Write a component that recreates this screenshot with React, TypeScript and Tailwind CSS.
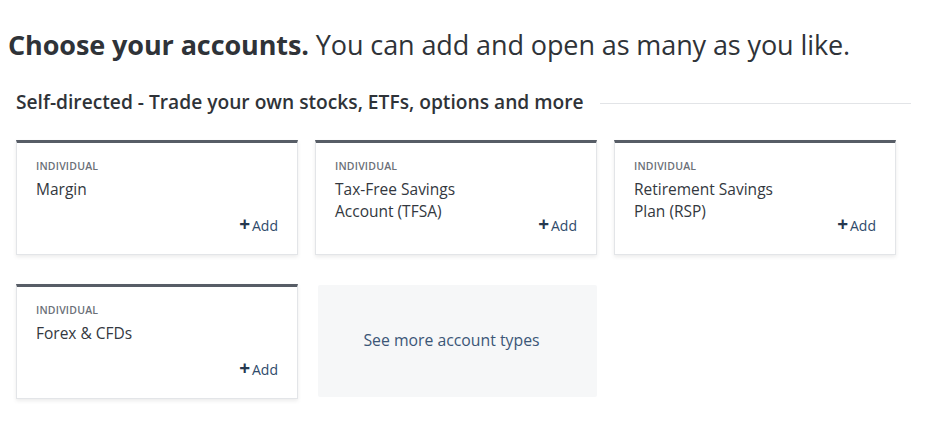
import React from "react";

const cards = [
  { name: ["Margin"] },
  { name: ["Tax-Free Savings", "Account (TFSA)"] },
  { name: ["Retirement Savings", "Plan (RSP)"] },
  { name: ["Forex & CFDs"] },
];

function Card({ name }: { name: string[] }) {
  return (
    <div className="relative h-[115px] bg-white border border-[#e3e5e8] border-t-[3px] border-t-[#575d66] shadow-[0_2px_4px_rgba(0,0,0,0.08)] pl-[19px] pr-[19px] pt-[16px]">
      <div className="text-[10.5px] font-semibold tracking-[0.2px] text-[#6b7078] leading-[14px]">INDIVIDUAL</div>
      <div className="mt-[5px] text-[15.5px] leading-[22px] text-[#333840]">
        {name.map((l) => (
          <div key={l}>{l}</div>
        ))}
      </div>
      <div className="absolute right-[19px] top-[72px] flex items-center gap-[2px] text-[14px] text-[#2f4a6b]">
        <span className="text-[19px] font-bold leading-none text-[#26384f] -mt-[2px]">+</span>
        <span>Add</span>
      </div>
    </div>
  );
}

export default function App() {
  return (
    <div className="w-[950px] h-[425px] bg-white font-['Open_Sans',sans-serif] overflow-hidden">
      <h1 className="pl-[8px] pt-[27px] text-[27px] leading-[36px] text-[#2f3338] tracking-[-0.1px]">
        <span className="font-bold">Choose your accounts.</span> You can add and open as many as you like.
      </h1>
      <div className="mt-[26px] pl-[16px] pr-[39px] flex items-center">
        <h2 className="text-[19.2px] font-semibold text-[#2f3338] leading-[26px] whitespace-nowrap">
          Self-directed - Trade your own stocks, ETFs, options and more
        </h2>
        <div className="ml-[16px] flex-1 h-px bg-[#e2e4e7] mt-[2px]"></div>
      </div>
      <div className="mt-[25px] pl-[16px] grid grid-cols-[282px_282px_282px] gap-x-[17px] gap-y-[29px]">
        {cards.slice(0, 3).map((c) => (
          <Card key={c.name[0]} name={c.name} />
        ))}
        <Card name={cards[3].name} />
        <div className="ml-[3px] mt-[1px] h-[112px] bg-[#f6f7f8] rounded-[2px] flex items-center justify-center pr-[12px] text-[15.8px] text-[#3b5677]">
          See more account types
        </div>
      </div>
    </div>
  );
}
